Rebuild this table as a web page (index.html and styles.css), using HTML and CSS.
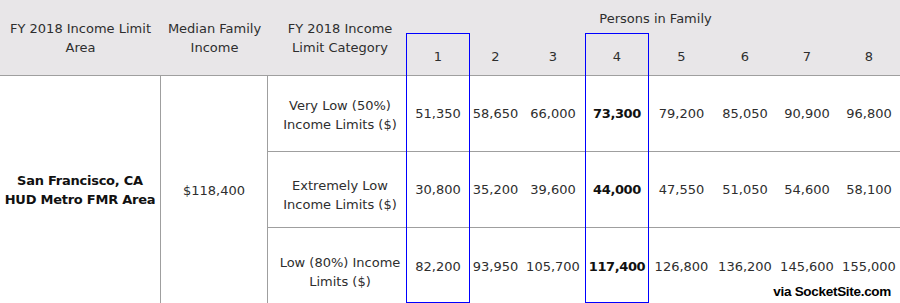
FILE: index.html
```html
<!DOCTYPE html>
<html lang="en">
<head>
<meta charset="utf-8">
<title>FY 2018 Income Limits</title>
<link rel="stylesheet" href="styles.css">
</head>
<body>
<div class="page">
  <div class="grid">
    <div class="hd hd-span c-area">FY 2018 Income Limit<br>Area</div>
    <div class="hd hd-span c-median">Median Family<br>Income</div>
    <div class="hd hd-span c-cat">FY 2018 Income<br>Limit Category</div>
    <div class="hd hd-persons">Persons in Family</div>
    <div class="hd hd-num">1</div>
    <div class="hd hd-num">2</div>
    <div class="hd hd-num">3</div>
    <div class="hd hd-num">4</div>
    <div class="hd hd-num">5</div>
    <div class="hd hd-num">6</div>
    <div class="hd hd-num">7</div>
    <div class="hd hd-num">8</div>

    <div class="cell area">San Francisco, CA<br>HUD Metro FMR Area</div>
    <div class="cell median">$118,400</div>

    <div class="cell cat row-line cat-first">Very Low (50%)<br>Income Limits ($)</div>
    <div class="cell num row-line">51,350</div>
    <div class="cell num row-line">58,650</div>
    <div class="cell num row-line">66,000</div>
    <div class="cell num row-line strong">73,300</div>
    <div class="cell num row-line">79,200</div>
    <div class="cell num row-line">85,050</div>
    <div class="cell num row-line">90,900</div>
    <div class="cell num row-line">96,800</div>

    <div class="cell cat row-line cat-low">Extremely Low<br>Income Limits ($)</div>
    <div class="cell num row-line">30,800</div>
    <div class="cell num row-line">35,200</div>
    <div class="cell num row-line">39,600</div>
    <div class="cell num row-line strong">44,000</div>
    <div class="cell num row-line">47,550</div>
    <div class="cell num row-line">51,050</div>
    <div class="cell num row-line">54,600</div>
    <div class="cell num row-line">58,100</div>

    <div class="cell cat cat-low">Low (80%) Income<br>Limits ($)</div>
    <div class="cell num">82,200</div>
    <div class="cell num">93,950</div>
    <div class="cell num">105,700</div>
    <div class="cell num strong">117,400</div>
    <div class="cell num">126,800</div>
    <div class="cell num">136,200</div>
    <div class="cell num">145,600</div>
    <div class="cell num">155,000</div>
  </div>

  <div class="highlight hl-1"></div>
  <div class="highlight hl-4"></div>
  <div class="credit">via SocketSite.com</div>
</div>
</body>
</html>
```
FILE: styles.css
```css
html, body {
  margin: 0;
  padding: 0;
  background: #ffffff;
}

.page {
  position: relative;
  width: 900px;
  height: 303px;
  overflow: hidden;
  font-family: "DejaVu Sans", Verdana, sans-serif;
  font-size: 13px;
  line-height: 19px;
  color: #2e2e2e;
}

.grid {
  display: grid;
  grid-template-columns: 161px 107px 138px 64px 51px 64px 64px 65px 62px 62px 62px;
  grid-template-rows: 37px 39px 76px 76px 76px;
}

.hd {
  background: #e8e6e8;
  display: flex;
  align-items: center;
  justify-content: center;
  text-align: center;
}

.hd-span {
  grid-row: 1 / span 2;
  border-bottom: 1px solid #9f9f9f;
}

.c-cat {
  padding-left: 6px;
}

.hd-persons {
  grid-column: 4 / span 8;
  padding-left: 5px;
}

.hd-num {
  border-bottom: 1px solid #9f9f9f;
}

.cell {
  display: flex;
  align-items: center;
  justify-content: center;
  text-align: center;
}

.area {
  grid-column: 1;
  grid-row: 3 / span 3;
  border-right: 1px solid #9f9f9f;
  font-weight: bold;
  letter-spacing: -0.25px;
  color: #111111;
}

.median {
  grid-column: 2;
  grid-row: 3 / span 3;
  border-right: 1px solid #9f9f9f;
}

.cat {
  grid-column: 3;
  padding-left: 6px;
  box-sizing: border-box;
}

.cat-first {
  padding-top: 3px;
}

.cat-low {
  padding-top: 11px;
}

.row-line {
  border-bottom: 1px solid #9f9f9f;
}

.strong {
  font-weight: bold;
  letter-spacing: -0.4px;
  color: #111111;
}

.highlight {
  position: absolute;
  top: 33px;
  width: 64px;
  height: 270px;
  box-sizing: border-box;
  border: 1px solid #0000ff;
}

.hl-1 {
  left: 406px;
}

.hl-4 {
  left: 585px;
}

.credit {
  position: absolute;
  right: 9px;
  top: 283px;
  font-family: "Liberation Sans", Arial, sans-serif;
  font-weight: bold;
  font-size: 13.5px;
  letter-spacing: -0.3px;
  line-height: 18px;
  color: #000000;
}
```
